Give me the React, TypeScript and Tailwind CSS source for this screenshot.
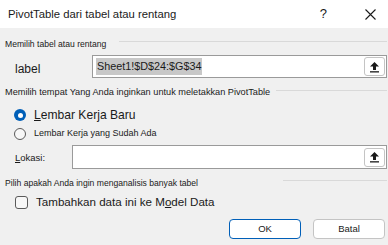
import React from 'react';

function PickButton() {
  return (
    <div className="ml-auto mr-[1px] flex h-[19px] w-[21px] items-center justify-center rounded-[3px] border border-[#c4c4c4] bg-white">
      <svg width="11" height="12" viewBox="0 0 11 12">
        <path d="M5.5 1 L10 5.5 L7 5.5 L7 9 L4 9 L4 5.5 L1 5.5 Z" fill="#1a1a1a" />
        <rect x="1" y="10.2" width="9" height="1.3" fill="#1a1a1a" />
      </svg>
    </div>
  );
}

function GroupHeader({ text, lineClass, textClass = '' }: { text: string; lineClass: string; textClass?: string }) {
  return (
    <div className="flex h-[16px] items-center text-[8.6px] text-[#1a1a1a]">
      <span className={'whitespace-nowrap ' + textClass}>{text}</span>
      <div className={'h-px self-start mt-[5px] bg-[#d9d9d9] ' + lineClass} />
    </div>
  );
}

export default function App() {
  return (
    <div
      className="w-[388px] h-[245px] bg-[#f0f0f0] overflow-hidden"
      style={{ fontFamily: '"Liberation Sans", Arial, sans-serif' }}
    >
      <div className="flex h-[28px] items-center bg-white pl-[8px]">
        <span className="text-[11.3px] text-[#1a1a1a]">PivotTable dari tabel atau rentang</span>
        <span className="ml-auto text-[13px] text-[#1a1a1a]">?</span>
        <svg className="ml-[38px] mr-[12px]" width="11" height="11" viewBox="0 0 11 11">
          <path d="M0.5 0.5 L10.5 10.5 M10.5 0.5 L0.5 10.5" stroke="#1a1a1a" strokeWidth="1.1" />
        </svg>
      </div>

      <div className="pl-[5px] pr-[1px]">
        <div className="mt-[8px]">
          <GroupHeader text="Memilih tabel atau rentang" lineClass="ml-[13px] flex-1" />
        </div>

        <div className="mt-[3px] flex h-[23px] items-center">
          <span className="w-[87px] pl-[10px] pt-[4px] text-[12px] text-[#1a1a1a]">label</span>
          <div className="flex h-[23px] flex-1 items-center border border-[#9a9a9a] bg-white pl-[3px]">
            <span className="bg-[#c8c8c8] px-[1px] py-[1px] text-[10.8px] leading-[15px] text-[#1a1a1a]">
              Sheet1!$D$24:$G$34
            </span>
            <PickButton />
          </div>
        </div>

        <div className="mt-[7px]">
          <GroupHeader
            text="Memilih tempat Yang Anda inginkan untuk meletakkan PivotTable"
            lineClass="ml-[6px] flex-1"
            textClass="text-[9.2px]"
          />
        </div>

        <div className="mt-[6px] flex h-[16px] items-center pl-[9px]">
          <div className="flex h-[12px] w-[12px] items-center justify-center rounded-full bg-[#005fb8]">
            <div className="h-[5px] w-[5px] rounded-full bg-white" />
          </div>
          <span className="ml-[8px] text-[12.1px] text-[#1a1a1a]">
            <span className="underline">L</span>embar Kerja Baru
          </span>
        </div>

        <div className="mt-[3px] flex h-[16px] items-center pl-[9px]">
          <div className="h-[12px] w-[12px] rounded-full border border-[#5a5a5a] bg-[#f7f7f7]" />
          <span className="ml-[8px] text-[9px] text-[#1a1a1a]">Lembar Kerja yang Sudah Ada</span>
        </div>

        <div className="mt-[3px] flex h-[24px] items-center">
          <span className="w-[67px] pl-[10px] pt-[2px] text-[9.5px] text-[#1a1a1a]">
            <span className="underline">L</span>okasi:
          </span>
          <div className="flex h-[24px] flex-1 items-center border border-[#9a9a9a] bg-white">
            <PickButton />
          </div>
        </div>

        <div className="mt-[6px]">
          <GroupHeader text="Pilih apakah Anda ingin menganalisis banyak tabel" lineClass="ml-auto w-[104px]" />
        </div>

        <div className="mt-[3px] flex h-[16px] items-center pl-[10px]">
          <div className="h-[13px] w-[13px] rounded-[3px] border border-[#5a5a5a] bg-[#f7f7f7]" />
          <span className="ml-[8px] text-[11.6px] text-[#1a1a1a]">
            Tambahkan data ini ke M<span className="underline">o</span>del Data
          </span>
        </div>

        <div className="mt-[9px] flex h-[20px] justify-end gap-[12px] pr-[2px]">
          <div className="flex h-[20px] w-[72px] items-center justify-center rounded-[4px] border border-[#005fb8] bg-white text-[9.5px] text-[#1a1a1a]">
            OK
          </div>
          <div className="flex h-[20px] w-[72px] items-center justify-center rounded-[4px] border border-[#c4c4c4] bg-white text-[9.5px] text-[#1a1a1a]">
            Batal
          </div>
        </div>
      </div>
    </div>
  );
}
